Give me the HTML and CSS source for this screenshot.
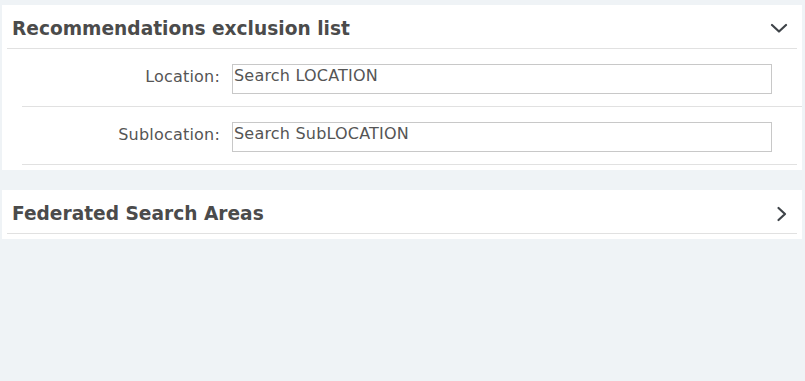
FILE: index.html
```html
<!DOCTYPE html>
<html>
<head>
<meta charset="utf-8">
<link rel="stylesheet" href="styles.css">
</head>
<body>
<section class="panel">
  <div class="panel-header">
    <h2 class="panel-title">Recommendations exclusion list</h2>
    <svg class="chev-down" width="18" height="10" viewBox="0 0 18 10"><path d="M2 2 L9 8.5 L16 2" fill="none" stroke="#3f4449" stroke-width="2.2" stroke-linecap="round" stroke-linejoin="round"/></svg>
  </div>
  <div class="field-row wide">
    <label class="field-label">Location:</label>
    <input class="field-input" type="text" placeholder="Search LOCATION">
  </div>
  <div class="field-row">
    <label class="field-label">Sublocation:</label>
    <input class="field-input" type="text" placeholder="Search SubLOCATION">
  </div>
</section>
<section class="panel">
  <div class="panel-header">
    <h2 class="panel-title">Federated Search Areas</h2>
    <svg class="chev-right" width="12" height="16" viewBox="0 0 12 16"><path d="M2.5 2 L9 8 L2.5 14" fill="none" stroke="#3f4449" stroke-width="2.2" stroke-linecap="round" stroke-linejoin="round"/></svg>
  </div>
</section>
</body>
</html>
```
FILE: styles.css
```css
html, body {
  margin: 0;
  padding: 0;
}
body {
  background: #eff3f6;
  padding: 5px 3px 0 2px;
  font-family: "DejaVu Sans", "Noto Sans", sans-serif;
  color: #555;
}
.panel {
  background: #fff;
  padding-bottom: 5px;
  margin-bottom: 20px;
}
.panel-header {
  margin: 0 5px;
  height: 43px;
  border-bottom: 1px solid #e1e1e1;
  display: flex;
  align-items: center;
  justify-content: space-between;
  padding: 0 9px 0 5px;
}
.panel-title {
  margin: 0;
  font-size: 18.6px;
  font-weight: bold;
  color: #4b4b4b;
  letter-spacing: 0;
  padding-top: 4px;
}
.chev-down {
  margin-top: 2px;
}
.chev-right {
  margin-top: 5px;
}
.field-row {
  margin-left: 20px;
  margin-right: 5px;
  display: flex;
  align-items: flex-start;
  padding: 15px 0 12px;
  border-bottom: 1px solid #e1e1e1;
}
.field-row.wide {
  margin-right: 0;
}
.field-label {
  width: 198px;
  text-align: right;
  font-size: 16px;
  letter-spacing: 0.2px;
  color: #555;
  padding-top: 3px;
  margin-right: 12px;
}
.field-input {
  box-sizing: border-box;
  width: 540px;
  height: 30px;
  border: 1px solid #c8c8c8;
  margin: 0;
  padding: 0 0 8px 1px;
  font-family: inherit;
  font-size: 16px;
  letter-spacing: 0.2px;
  color: #555;
  outline: none;
}
.field-input::placeholder {
  color: #555;
  opacity: 1;
}
```
